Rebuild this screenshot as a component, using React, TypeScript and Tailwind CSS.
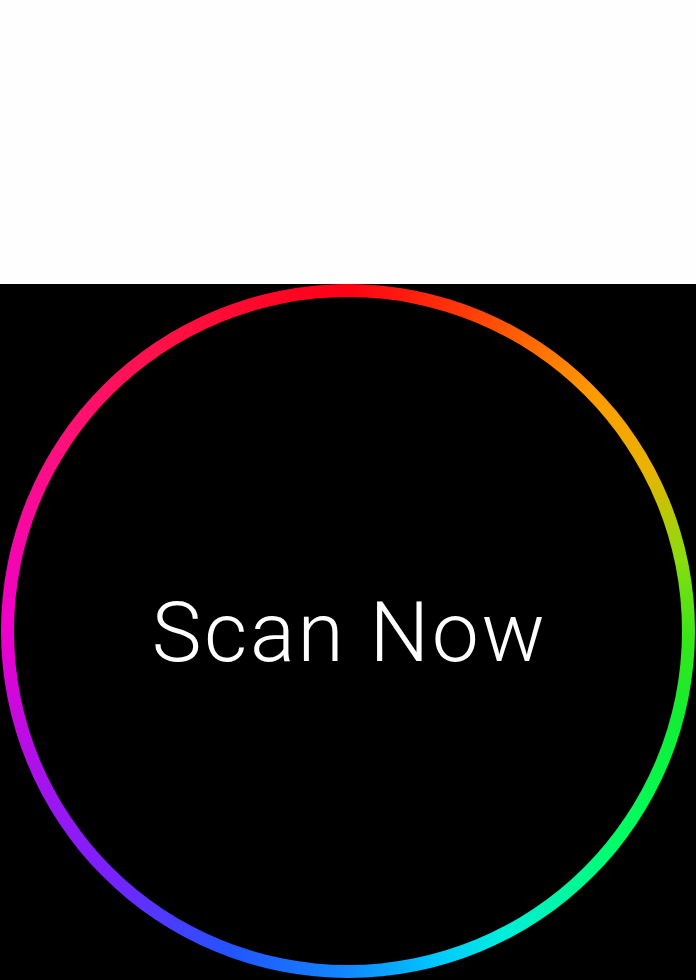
import React from "react";

export default function App() {
  return (
    <div className="w-[696px] h-[980px] flex flex-col bg-white">
      <div className="h-[284px] bg-[#fefefe]" />
      <div className="flex-1 bg-black flex justify-center">
        <div className="w-[694px] h-[694px] rounded-full p-[13px] bg-[conic-gradient(from_0deg,#ff0014_0deg,#ff3a08_20deg,#ff9900_45deg,#e8b400_62deg,#88dd10_78deg,#33e619_92deg,#11ee33_105deg,#00ff66_128deg,#00eedd_153deg,#00c8ff_165deg,#1188ff_180deg,#2255ff_200deg,#7722ff_224deg,#b010e8_248deg,#ee00cc_270deg,#ff1177_305deg,#ff1144_329deg,#ff0014_360deg)]">
          <div className="w-full h-full rounded-full bg-black flex items-center justify-center">
            <span className="text-white text-[84px] leading-none font-light tracking-[2.6px] pl-[3px] pt-[3px] font-['Roboto',sans-serif]">
              Scan Now
            </span>
          </div>
        </div>
      </div>
    </div>
  );
}
